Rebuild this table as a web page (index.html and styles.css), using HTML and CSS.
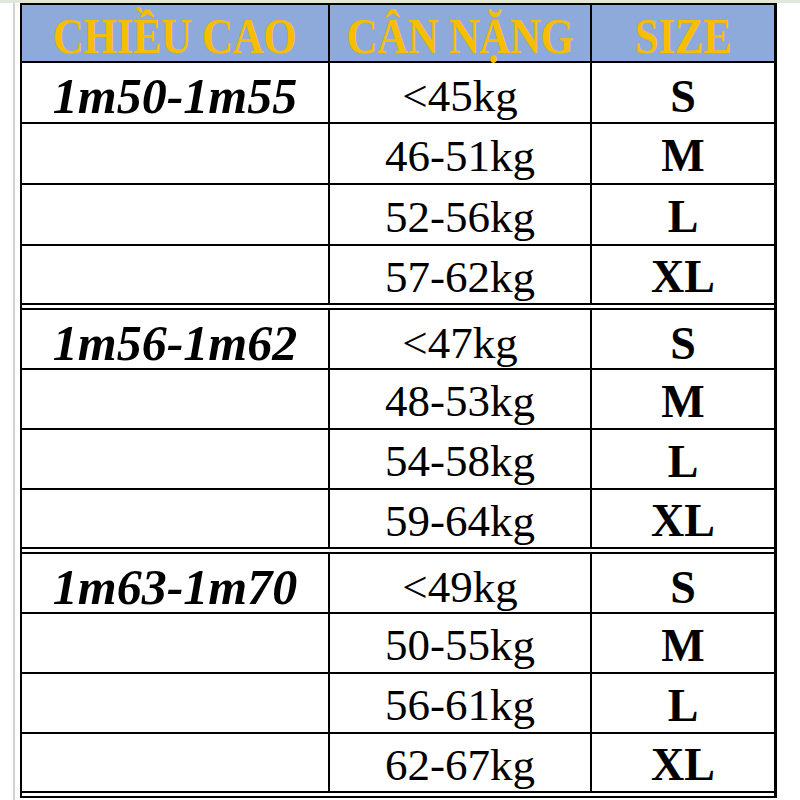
FILE: index.html
```html
<!DOCTYPE html>
<html lang="vi">
<head>
<meta charset="utf-8">
<title>Bảng size</title>
<link rel="stylesheet" href="styles.css">
</head>
<body>
<div class="topline"></div>
<div class="sheet">
  <div class="table">
    <div class="row head">
      <div class="cell"><span class="hd">CHIỀU CAO</span></div>
      <div class="cell"><span class="hd">CÂN NẶNG</span></div>
      <div class="cell"><span class="hd">SIZE</span></div>
    </div>

    <div class="group g1">
      <div class="row"><div class="cell height">1m50-1m55</div><div class="cell weight">&lt;45kg</div><div class="cell size">S</div></div>
      <div class="row"><div class="cell height"></div><div class="cell weight">46-51kg</div><div class="cell size">M</div></div>
      <div class="row"><div class="cell height"></div><div class="cell weight">52-56kg</div><div class="cell size">L</div></div>
      <div class="row"><div class="cell height"></div><div class="cell weight">57-62kg</div><div class="cell size">XL</div></div>
    </div>

    <div class="group g2">
      <div class="row"><div class="cell height">1m56-1m62</div><div class="cell weight">&lt;47kg</div><div class="cell size">S</div></div>
      <div class="row"><div class="cell height"></div><div class="cell weight">48-53kg</div><div class="cell size">M</div></div>
      <div class="row"><div class="cell height"></div><div class="cell weight">54-58kg</div><div class="cell size">L</div></div>
      <div class="row"><div class="cell height"></div><div class="cell weight">59-64kg</div><div class="cell size">XL</div></div>
    </div>

    <div class="group g3">
      <div class="row"><div class="cell height">1m63-1m70</div><div class="cell weight">&lt;49kg</div><div class="cell size">S</div></div>
      <div class="row"><div class="cell height"></div><div class="cell weight">50-55kg</div><div class="cell size">M</div></div>
      <div class="row"><div class="cell height"></div><div class="cell weight">56-61kg</div><div class="cell size">L</div></div>
      <div class="row"><div class="cell height"></div><div class="cell weight">62-67kg</div><div class="cell size">XL</div></div>
    </div>
  </div>
</div>
</body>
</html>
```

FILE: styles.css
```css
html, body {
  margin: 0;
  padding: 0;
  background: #ffffff;
  overflow: hidden;
}

body {
  width: 800px;
  height: 800px;
  font-family: "Liberation Serif", "Times New Roman", serif;
  color: #000;
}

.topline {
  height: 3px;
  background: #e3e7da;
}

.sheet {
  margin-left: 13px;
  border-left: 2px solid #d2d2d2;
  padding-left: 5px;
  height: 797px;
}

.table {
  width: 752px;
  border-left: 2px solid #000;
  border-right: 3px solid #000;
}

.row {
  display: grid;
  grid-template-columns: 308px 262px 182px;
  border-bottom: 2px solid #000;
}

.cell {
  border-right: 2px solid #000;
  display: flex;
  align-items: center;
  justify-content: center;
  padding-top: 4px;
  box-sizing: border-box;
  white-space: nowrap;
}

.cell:last-child {
  border-right: none;
}

.head {
  border-top: 2px solid #000;
  background: #8eaadb;
  height: 56px;
}

.head .cell {
  padding-top: 2px;
}

.hd {
  font-weight: bold;
  font-size: 50px;
  color: #f7bd00;
  display: inline-block;
  transform: scaleX(0.86);
  letter-spacing: -0.5px;
}

.group {
  border-bottom: 7px double #000;
}

.group .row:last-child {
  border-bottom: none;
}

.g1 .row { height: 59px; }
.g2 .row { height: 58px; }
.g3 .row { height: 58px; }
.g1 .row:last-child,
.g2 .row:last-child,
.g3 .row:last-child { height: 57px; }

.height {
  font-size: 50px;
  font-weight: bold;
  font-style: italic;
}

.weight {
  font-size: 45px;
}

.size {
  font-size: 46px;
  font-weight: bold;
}
```
